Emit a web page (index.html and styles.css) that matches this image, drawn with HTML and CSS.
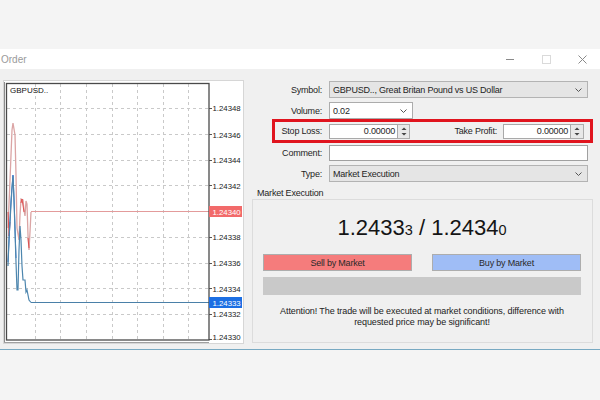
FILE: index.html
```html
<!DOCTYPE html>
<html>
<head>
<meta charset="utf-8">
<link rel="stylesheet" href="styles.css">
</head>
<body>
<div class="top-gap"></div>
<div class="titlebar">
  <span class="title">Order</span>
  <div class="win-ctrls">
    <div class="win-btn"><svg width="8" height="8" viewBox="0 0 8 8"><line x1="0" y1="4.5" x2="8" y2="4.5" stroke="#8a8a8a" stroke-width="1"/></svg></div>
    <div class="win-btn"><svg width="9" height="9" viewBox="0 0 9 9"><rect x="0.5" y="0.5" width="8" height="8" fill="none" stroke="#dadada" stroke-width="1"/></svg></div>
    <div class="win-btn"><svg width="9" height="9" viewBox="0 0 9 9"><path d="M0.5 0.5 L8.5 8.5 M8.5 0.5 L0.5 8.5" stroke="#8a8a8a" stroke-width="1"/></svg></div>
  </div>
</div>
<div class="dialog">
  <svg class="chart" width="241" height="264" viewBox="3 80 241 264">
    <rect x="3.5" y="80.5" width="240" height="263" fill="#fff" stroke="#d6d6d6"/>
    <g stroke="#c9c9c9" stroke-width="1" stroke-dasharray="3 3">
      <line x1="35.5" y1="84" x2="35.5" y2="340"/>
      <line x1="60.5" y1="84" x2="60.5" y2="340"/>
      <line x1="86.5" y1="84" x2="86.5" y2="340"/>
      <line x1="112.5" y1="84" x2="112.5" y2="340"/>
      <line x1="137.5" y1="84" x2="137.5" y2="340"/>
      <line x1="163.5" y1="84" x2="163.5" y2="340"/>
      <line x1="188.5" y1="84" x2="188.5" y2="340"/>
      <line x1="7" y1="108.5" x2="208" y2="108.5"/>
      <line x1="7" y1="134.5" x2="208" y2="134.5"/>
      <line x1="7" y1="160.5" x2="208" y2="160.5"/>
      <line x1="7" y1="185.5" x2="208" y2="185.5"/>
      <line x1="7" y1="237.5" x2="208" y2="237.5"/>
      <line x1="7" y1="263.5" x2="208" y2="263.5"/>
      <line x1="7" y1="288.5" x2="208" y2="288.5"/>
      <line x1="7" y1="314.5" x2="208" y2="314.5"/>
    </g>
    <g stroke="#555" stroke-width="1">
      <line x1="209" y1="108.5" x2="212" y2="108.5"/>
      <line x1="209" y1="134.5" x2="212" y2="134.5"/>
      <line x1="209" y1="160.5" x2="212" y2="160.5"/>
      <line x1="209" y1="185.5" x2="212" y2="185.5"/>
      <line x1="209" y1="237.5" x2="212" y2="237.5"/>
      <line x1="209" y1="263.5" x2="212" y2="263.5"/>
      <line x1="209" y1="288.5" x2="212" y2="288.5"/>
      <line x1="209" y1="314.5" x2="212" y2="314.5"/>
      <line x1="209" y1="339.5" x2="212" y2="339.5"/>
    </g>
    <line x1="31" y1="211.5" x2="209" y2="211.5" stroke="#e39b9b" stroke-width="1.2"/>
    <line x1="31" y1="302.5" x2="209" y2="302.5" stroke="#4a80a8" stroke-width="1.2"/>
    <polyline fill="none" stroke="#dba4a4" stroke-width="1.3" points="8,228 10,180 12,130 13,123 15,135 16,175 17,228 19,240 20,215 21,199 23,200 24,210 25,216 26,201 27,204 28,235 29,250 30,232 31,212"/>
    <polyline fill="none" stroke="#e04545" stroke-width="0.9" points="8,212 9,236 10,222"/>
    <polyline fill="none" stroke="#e04545" stroke-width="0.9" points="21,203 22,199 24,212"/>
    <polyline fill="none" stroke="#e04545" stroke-width="0.9" points="28,238 29,248"/>
    <polyline fill="none" stroke="#2f6fd0" stroke-width="1" points="8,262 9,242 11,200 13,175 14,198 16,258"/>
    <polyline fill="none" stroke="#4d86ae" stroke-width="1.2" points="8,266 9,238 12,188 13,176 14,200 16,262 17,290 18,290 19,250 20,226 21,240 22,266 23,280 25,280 26,292 27,290 29,300 31,302.5"/>
    <line x1="4.5" y1="82" x2="4.5" y2="343" stroke="#8c8c8c"/>
    <rect x="6.5" y="83.5" width="202.5" height="256.5" fill="none" stroke="#4a4a4a" stroke-width="1.3"/>
    <line x1="4" y1="342.5" x2="209" y2="342.5" stroke="#a0a0a0"/>
    <text x="10" y="93" class="ch-sym">GBPUSD..</text>
    <g class="ch-lbl">
      <text x="212.5" y="111">1.24348</text>
      <text x="212.5" y="137.5">1.24346</text>
      <text x="212.5" y="163">1.24344</text>
      <text x="212.5" y="188.5">1.24342</text>
      <text x="212.5" y="240">1.24338</text>
      <text x="212.5" y="266">1.24336</text>
      <text x="212.5" y="291.5">1.24334</text>
      <text x="212.5" y="317">1.24332</text>
      <text x="212.5" y="340">1.24330</text>
    </g>
    <rect x="209" y="206" width="33" height="11" fill="#f26a6a"/>
    <text x="212.5" y="214.5" class="ch-lbl ch-w">1.24340</text>
    <rect x="209" y="297" width="33" height="11" fill="#1c6fe3"/>
    <text x="212.5" y="305.5" class="ch-lbl ch-w">1.24333</text>
  </svg>

  <div class="panel">
    <div class="row">
      <span class="lbl">Symbol:</span>
      <div class="field gray wide">
        <span class="ftext">GBPUSD.., Great Britan Pound vs US Dollar</span>
        <svg class="chev" width="7" height="4" viewBox="0 0 7 4"><path d="M0.5 0.5 L3.5 3.5 L6.5 0.5" fill="none" stroke="#555" stroke-width="1"/></svg>
      </div>
    </div>
    <div class="row r-vol">
      <span class="lbl">Volume:</span>
      <div class="field vol">
        <span class="ftext">0.02</span>
        <svg class="chev" width="7" height="4" viewBox="0 0 7 4"><path d="M0.5 0.5 L3.5 3.5 L6.5 0.5" fill="none" stroke="#555" stroke-width="1"/></svg>
      </div>
    </div>
    <div class="hl">
      <span class="lbl-sl">Stop Loss:</span>
      <div class="num sl">0.00000</div>
      <div class="spin">
        <svg width="6" height="11" viewBox="0 0 6 11"><path d="M3 1.5 L5.5 4 L0.5 4 Z" fill="#444"/><path d="M0.5 7 L5.5 7 L3 9.5 Z" fill="#444"/></svg>
      </div>
      <span class="lbl-tp">Take Profit:</span>
      <div class="num tp">0.00000</div>
      <div class="spin tp-spin">
        <svg width="6" height="11" viewBox="0 0 6 11"><path d="M3 1.5 L5.5 4 L0.5 4 Z" fill="#444"/><path d="M0.5 7 L5.5 7 L3 9.5 Z" fill="#444"/></svg>
      </div>
    </div>
    <div class="row r-com">
      <span class="lbl">Comment:</span>
      <div class="field wide com"></div>
    </div>
    <div class="row r-type">
      <span class="lbl">Type:</span>
      <div class="field gray wide">
        <span class="ftext">Market Execution</span>
        <svg class="chev" width="7" height="4" viewBox="0 0 7 4"><path d="M0.5 0.5 L3.5 3.5 L6.5 0.5" fill="none" stroke="#555" stroke-width="1"/></svg>
      </div>
    </div>
    <div class="group">
      <div class="legend">Market Execution</div>
      <div class="gbox">
        <div class="price">1.2433<span class="small">3</span> / 1.2434<span class="small">0</span></div>
        <div class="btns">
          <div class="btn sell">Sell by Market</div>
          <div class="btn buy">Buy by Market</div>
        </div>
        <div class="bar"></div>
        <div class="attn">Attention! The trade will be executed at market conditions, difference with<br>requested price may be significant!</div>
      </div>
    </div>
  </div>
</div>
</body>
</html>
```
FILE: styles.css
```css
* { box-sizing: border-box; }
body {
  margin: 0;
  width: 600px;
  height: 400px;
  overflow: hidden;
  background: #f4f4f4;
  font-family: "Liberation Sans", Arial, sans-serif;
  color: #1e1e1e;
}
.top-gap { height: 49px; }
.titlebar {
  height: 20px;
  background: #fff;
  display: flex;
  align-items: center;
}
.title {
  font-size: 10px;
  color: #9a9a9a;
  padding-left: 1px;
}
.win-ctrls { margin-left: auto; display: flex; }
.win-btn {
  width: 36px;
  height: 20px;
  display: flex;
  align-items: center;
  justify-content: center;
}
.dialog {
  height: 281px;
  background: #f0f0f0;
  border-bottom: 1px solid #78a9c2;
  display: flex;
  align-items: flex-start;
}
.chart { display: block; margin: 11px 0 0 3px; flex: none; }
.ch-sym { font-size: 8px; fill: #111; font-family: "Liberation Sans", Arial, sans-serif; }
.ch-lbl { font-size: 7.8px; fill: #222; font-family: "Liberation Sans", Arial, sans-serif; }
.ch-w { fill: #fff; }

.panel {
  margin-left: 6px;
  width: 344px;
  padding-top: 12px;
  display: flex;
  flex-direction: column;
  font-size: 9px;
  letter-spacing: -0.2px;
}
.row { display: flex; align-items: center; height: 17px; }
.r-vol { margin-top: 4px; }
.r-com { margin-top: 1px; }
.r-type { margin-top: 4px; }
.lbl {
  width: 79px;
  padding-right: 7px;
  text-align: right;
  flex: none;
}
.field {
  height: 17px;
  border: 1px solid #acacac;
  background: #fff;
  display: flex;
  align-items: center;
  padding: 0 5px 0 3px;
}
.field.gray { background: #e5e5e5; border-color: #b3b3b3; }
.wide { width: 259px; }
.vol { width: 84px; }
.com { height: 16px; border-color: #a0a0a0; }
.ftext { flex: 1; white-space: nowrap; }
.chev { flex: none; }

.hl {
  margin-left: 22px;
  width: 321px;
  height: 24px;
  border: 3px solid #e0141e;
  display: flex;
  align-items: center;
}
.lbl-sl { width: 47px; text-align: right; flex: none; }
.num {
  height: 15px;
  border: 1px solid #a9a9a9;
  background: #fff;
  text-align: right;
  padding-right: 2px;
  line-height: 13px;
  flex: none;
}
.sl { width: 69px; margin-left: 7px; }
.tp { width: 68px; }
.spin {
  width: 12px;
  height: 15px;
  border: 1px solid #adadad;
  border-left: none;
  background: #e8e8e8;
  display: flex;
  align-items: center;
  justify-content: center;
  flex: none;
}
.tp-spin { width: 13px; }
.lbl-tp {
  width: 93px;
  padding-right: 6px;
  text-align: right;
  flex: none;
}

.group { margin-top: 6px; margin-left: 2px; width: 341px; }
.legend { height: 11px; line-height: 11px; padding-left: 5px; }
.gbox {
  height: 144px;
  border: 1px solid #dcdcdc;
  padding: 15px 11px 0 10px;
}
.price {
  height: 26px;
  line-height: 26px;
  text-align: center;
  font-size: 22px;
  letter-spacing: 0;
  color: #151515;
}
.price .small { font-size: 14.5px; }
.btns {
  margin-top: 13px;
  display: grid;
  grid-template-columns: 1fr 1fr;
  gap: 20px;
}
.btn {
  height: 17px;
  border: 1px solid #adadad;
  display: flex;
  align-items: center;
  justify-content: center;
  color: #2a2a2a;
}
.sell { background: #f57c7c; }
.buy { background: #9fbdf6; }
.bar { margin-top: 6px; height: 18px; background: #c9c9c9; }
.attn {
  margin-top: 11px;
  line-height: 11px;
  text-align: center;
  color: #222;
  letter-spacing: -0.1px;
}
```
